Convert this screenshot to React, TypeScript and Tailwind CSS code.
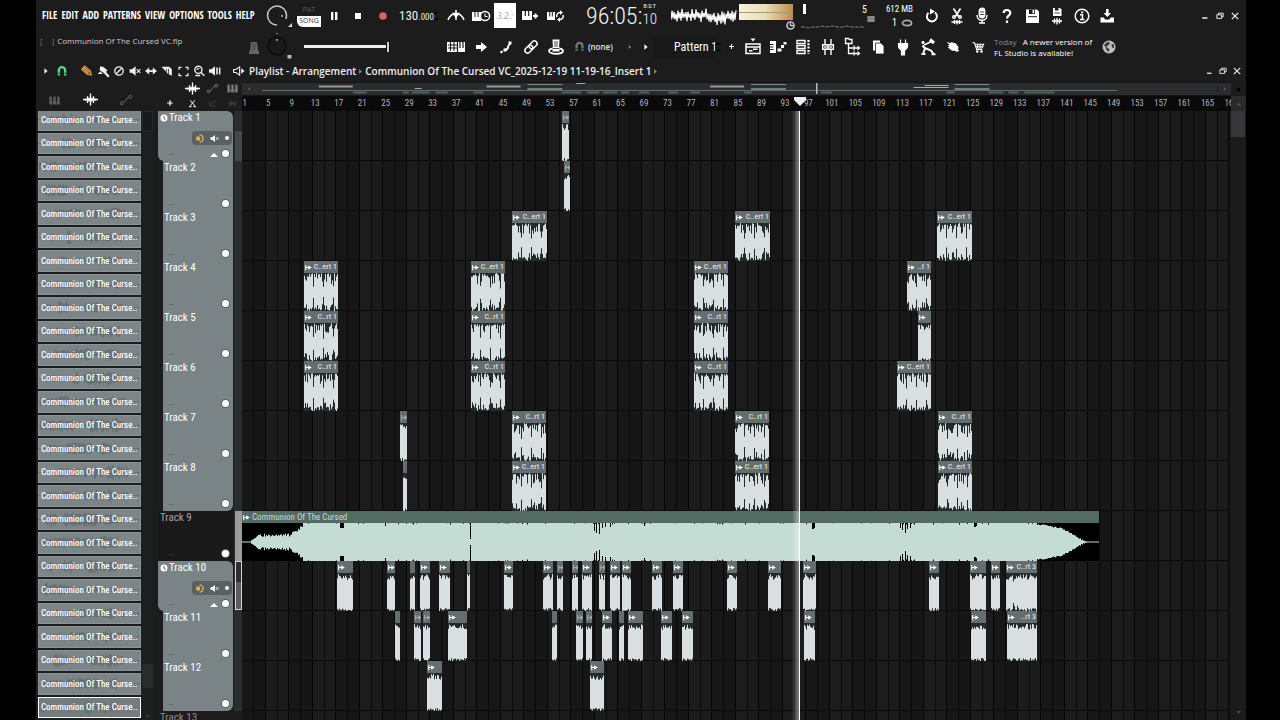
import type { ReactNode } from "react";

const COND = "font-['Roboto_Condensed','Open_Sans',sans-serif]";
const MENU_FONT = "font-['Open_Sans_Condensed','Roboto_Condensed',sans-serif]";

/* ---------- icons: all drawn on a 20 x 20 box ---------- */

const ICONS: Record<string, ReactNode> = {
  pause: <path d="M7 6h2.4v8H7zM11 6h2.4v8H11z" fill="currentColor" />,
  stop: <path d="M7 7h6v6H7z" fill="currentColor" />,
  record: <circle cx="10" cy="10" r="3.8" fill="#e0605f" />,
  metronome: (
    <g fill="none" stroke="currentColor" strokeWidth="1.5">
      <path d="M2 14c2-5 5-6.500 8-6.500s6 1.500 8 6.500" />
      <path d="M10 4v10" />
      <path d="M7.500 7.500L10 11l2.500-3.500z" fill="currentColor" />
    </g>
  ),
  wait: (
    <g>
      <path d="M1 6h9v9H1z" fill="currentColor" />
      <path d="M4 6v5M7 6v5" stroke="#1c1c1c" strokeWidth="1" />
      <circle cx="14" cy="10" r="4.600" fill="#1c1c1c" stroke="currentColor" strokeWidth="1.500" />
      <path d="M14 7.500V10.500h2.500" stroke="currentColor" fill="none" />
    </g>
  ),
  overdub: (
    <g>
      <path d="M2 5h10v9H2z" fill="currentColor" />
      <path d="M5.300 5v5M8.700 5v5" stroke="#1c1c1c" strokeWidth="1.200" />
      <path d="M15.500 7.500v5M13 10h5" stroke="currentColor" strokeWidth="2" />
    </g>
  ),
  loopRec: (
    <g>
      <path d="M2 6h8v8H2z" fill="currentColor" />
      <path d="M4.700 6v4.500M7.300 6v4.500" stroke="#1c1c1c" />
      <path d="M11.800 11a3.400 3.400 0 0 1 3.500-4.400M18 9a3.400 3.400 0 0 1-3.500 4.600" fill="none" stroke="currentColor" strokeWidth="1.500" />
      <path d="M15 4.200l3 2.400-3 2.400zM15 11.200l-3 2.400 3 2.400z" fill="currentColor" />
    </g>
  ),
  keyboard: (
    <g>
      <path d="M1 5h18v10H1z" fill="currentColor" />
      <path d="M2 8h9M2 11h9M4.500 5v9M8 5v9" stroke="#1c1c1c" strokeWidth="1.100" />
      <path d="M11.500 5v10M14 5v6M17 5v6" stroke="#1c1c1c" strokeWidth="1.200" />
    </g>
  ),
  arrow: <path d="M5 8h5V5l6 5-6 5v-3H5z" fill="currentColor" />,
  steps: (
    <g fill="currentColor">
      <circle cx="5.500" cy="15" r="1.300" />
      <circle cx="9" cy="13" r="1.800" />
      <path d="M9 13c4.500 0 1.500-4 5-6" stroke="currentColor" strokeWidth="2" fill="none" />
      <path d="M12.500 4.500h3v3h-3z" />
    </g>
  ),
  link: (
    <g fill="none" stroke="currentColor" strokeWidth="1.500" transform="rotate(-45 10 10)">
      <rect x="2.500" y="7.300" width="9" height="5.400" rx="2.700" />
      <rect x="8.500" y="7.300" width="9" height="5.400" rx="2.700" />
    </g>
  ),
  hat: (
    <g>
      <path d="M6.500 2.500h7l-.5 9H7z" fill="currentColor" />
      <path d="M9 4v6M11 4v6" stroke="#1c1c1c" strokeWidth=".8" />
      <ellipse cx="10" cy="14" rx="7" ry="2.800" fill="none" stroke="currentColor" strokeWidth="1.800" />
      <path d="M6.500 10.500h7v4h-7z" fill="currentColor" />
      <path d="M6.500 11.500h7" stroke="#1c1c1c" strokeWidth=".8" />
    </g>
  ),
  magnet: (
    <g fill="none" stroke="currentColor" strokeWidth="3.400">
      <path d="M5.500 16.500V9a4.500 4.500 0 0 1 9 0v7.500" />
      <path d="M3.500 13.200h4.500M12 13.200h4.500" stroke="#1c1c1c" strokeWidth="1.100" />
    </g>
  ),
  playlist: (
    <g fill="none" stroke="currentColor" strokeWidth="1.500">
      <path d="M3 7h14v9.500H3zM3 10h14" />
      <path d="M6 13.800h3.500M10 12.300h4.500" />
      <path d="M7.500 1.500h5L10 4.500z" fill="currentColor" stroke="none" />
    </g>
  ),
  pianoroll: (
    <g fill="currentColor">
      <path d="M2 4h6v12H2z" />
      <path d="M2 7.500h3.500M2 10h3.500M2 12.500h3.500" stroke="#1c1c1c" strokeWidth="1" />
      <path d="M9.500 11.500h4v3h-4zM13 8h3v3h-3zM15.500 5h3v2.600h-3z" />
    </g>
  ),
  rack: (
    <g fill="none" stroke="currentColor" strokeWidth="1.400">
      <path d="M4 3.500h8v3H4zM4 8.500h8v3H4zM4 13.500h8v3H4z" />
      <path d="M15.500 3v14" strokeDasharray="2 1.300" strokeWidth="2.200" />
    </g>
  ),
  mixer: (
    <g fill="none" stroke="currentColor" strokeWidth="1.400">
      <path d="M7 2v5M13 2v5M7 13v5M13 13v5" />
      <path d="M4.700 7.700h4.500v4.500H4.700zM10.900 7.700h4.500v4.500h-4.500z" />
      <path d="M7 9v2M13 9v2" />
    </g>
  ),
  tree: (
    <g fill="none" stroke="currentColor" strokeWidth="1.300">
      <path d="M2.500 1.500h3l1 1h2.500v4H2.500zM5.500 7v9.500h5M5.500 11h5" />
      <path d="M11 8.500v5M11 14.500v4M11 11h4M11 16.500h4" />
      <path d="M14.500 8.500l3 2.500-3 2.500zM14.500 14l3 2.500-3 2.500z" fill="currentColor" stroke="none" />
    </g>
  ),
  copy: (
    <g>
      <path d="M5 3.500h7v10H5z" fill="currentColor" />
      <path d="M7.500 6h5.500l3 3v8H7.500z" fill="currentColor" stroke="#1c1c1c" strokeWidth=".8" />
    </g>
  ),
  plug: <path d="M7.500 2.500v4M12.500 2.500v4M5.500 6.500h9v3c0 2-2.500 3.500-3 4V18h-3v-4.500c-.5-.5-3-2-3-4z" fill="currentColor" stroke="currentColor" strokeWidth="1.200" />,
  digger: (
    <g fill="none" stroke="currentColor" strokeWidth="2">
      <path d="M12 2.500l4 3.500" strokeWidth="3" />
      <path d="M13.500 4.500L6 8" strokeWidth="1.500" />
      <circle cx="5" cy="5.500" r="1.200" fill="currentColor" strokeWidth="1" />
      <path d="M4.500 8.500l2.500 3L5 17M7 11l6 2.500 2.500 3.500M3.500 17h4M13.500 17.200h4" />
    </g>
  ),
  touch: <path d="M3 4.500l4 1.500 2-1 5 1.500 3 4-.5 3 1.500 1.500-3 1.500-2-1.500c-3 .5-5-.5-6-2L4 11l2.500-.5-2-2L6.500 8z" fill="currentColor" />,
  cart: (
    <g fill="none" stroke="currentColor" strokeWidth="1.500">
      <path d="M2 4h3l3 9.500h8M6 6h12l-2 5.500H7.500M6.500 8.800h10.500M9.500 6v5.500M13 6v5.500" />
      <circle cx="9" cy="16.500" r="1.100" fill="currentColor" />
      <circle cx="15" cy="16.500" r="1.100" fill="currentColor" />
    </g>
  ),
  globe: (
    <g>
      <circle cx="10" cy="10" r="6.500" fill="#bdbdbd" />
      <path d="M8 5l3 .5-1 2.500-2.500 1 1 2 2 1-1 3-2-2-1-3-1.500-2zM12.500 7l2.500.5v3.500l-2-.5z" fill="#3a3a3a" />
    </g>
  ),
  undo: (
    <g fill="none" stroke="currentColor" strokeWidth="1.900">
      <path d="M6.500 6.800a5 5 0 1 0 6.500-.3" />
      <path d="M8 2.500v6l5-3z" fill="currentColor" stroke="none" />
    </g>
  ),
  cut: (
    <g fill="none" stroke="currentColor" strokeWidth="1.400">
      <path d="M6.500 2.500L12 11M13.500 2.500L8 11" strokeWidth="1.700" />
      <circle cx="7" cy="11" r="1.300" />
      <circle cx="13" cy="11" r="1.300" />
      <path d="M4.500 16h11M7.500 14v4M12.500 14v4M10 14v4.500" />
    </g>
  ),
  mic: (
    <g fill="none" stroke="currentColor" strokeWidth="1.400">
      <rect x="7.300" y="2.300" width="5.400" height="9.500" rx="2.700" fill="currentColor" />
      <path d="M5 9c0 7 10 7 10 0M10 14.500v2M7 17h6" />
      <path d="M8 6h4M8 8.500h4" stroke="#1c1c1c" strokeWidth=".8" />
    </g>
  ),
  help: (
    <g fill="none" stroke="currentColor" strokeWidth="2.200">
      <path d="M6.700 7c0-4 6.600-4 6.600 0 0 2.500-3.300 2.500-3.300 5.600" />
      <path d="M10 14.500v2.500" />
    </g>
  ),
  save: (
    <g>
      <path d="M4 3.500h11l2 2V17H4z" fill="currentColor" />
      <path d="M7 3.500h6v4.500H7z" fill="#1c1c1c" />
      <path d="M10.500 4h1.700v3.300h-1.700z" fill="currentColor" />
      <path d="M6 10.700h9" stroke="#1c1c1c" />
    </g>
  ),
  saveNew: (
    <g>
      <path d="M6 2h7l1.500 1.500V10H6z" fill="currentColor" />
      <path d="M8 2h3.500v2.500H8z" fill="#1c1c1c" />
      <path d="M7.500 7h5.500" stroke="#1c1c1c" strokeWidth=".8" />
      <path d="M5 15h10M7.500 12.500v5M12.500 12.500v5M10 12v6.500" stroke="currentColor" strokeWidth="1.400" />
    </g>
  ),
  info: (
    <g fill="none" stroke="currentColor" strokeWidth="1.500">
      <circle cx="10" cy="10" r="6.800" />
      <path d="M8 8.800h2.400v4.800M8 13.600h4.500" />
      <path d="M10.200 5.500v1.800" strokeWidth="2" />
    </g>
  ),
  download: (
    <g fill="currentColor">
      <path d="M9 3h2.600v4H14l-3.700 4L6.600 7H9z" />
      <path d="M3.500 11.500h3.500c0 3 6.500 3 6.500 0H17v5H3.500z" />
    </g>
  ),
  pencil: (
    <g transform="rotate(42 10 10)" fill="none" stroke="#e9a24a" strokeWidth="1.600">
      <path d="M1 6.500h12l5 3.500-5 3.500H1z" fill="#6e4719" />
      <path d="M1 8.900h12M1 11.300h12" />
    </g>
  ),
  brush: (
    <g fill="currentColor">
      <path d="M5 2l5 1 6 5-4 5-8-5z" />
      <path d="M11 10l7 8" stroke="currentColor" strokeWidth="3.400" />
      <path d="M1 14l4-4 4 4z" />
    </g>
  ),
  forbid: (
    <g fill="none" stroke="currentColor" strokeWidth="2.200">
      <circle cx="10" cy="10" r="7" />
      <path d="M5.500 14.500l9-9" />
    </g>
  ),
  mute: (
    <g>
      <path d="M1 7h4l6-5v16l-6-5H1z" fill="currentColor" />
      <path d="M13 7l6 6M19 7l-6 6" stroke="currentColor" strokeWidth="1.800" />
    </g>
  ),
  slip: (
    <g fill="currentColor">
      <path d="M0 10l7-6v12zM20 10l-7-6v12z" />
      <path d="M4 8.500h12v3H4z" />
    </g>
  ),
  slice: (
    <g fill="currentColor">
      <path d="M1 3h13l4 4v11l-7-4z" />
      <path d="M9 6.500v7M12.500 6v9" stroke="#1c1c1c" strokeWidth="1.200" />
    </g>
  ),
  select: <path d="M2 7V2.500h4.500M13.500 2.500H18V7M18 13v4.500h-4.500M6.500 17.500H2V13" fill="none" stroke="currentColor" strokeWidth="2.400" />,
  zoom: (
    <g fill="none" stroke="currentColor" strokeWidth="2.300">
      <circle cx="9" cy="8" r="6" />
      <path d="M13 12l6 6M4 17.500h8" />
      <path d="M6.500 8.500a2.500 2.500 0 0 1 4-2" strokeWidth="1.800" />
    </g>
  ),
  playback: (
    <g fill="currentColor">
      <path d="M0 7h4l6-5v16l-6-5H0z" />
      <path d="M12 4h2.500v12H12zM16.500 4H19v12h-2.500z" />
    </g>
  ),
  speaker: (
    <g>
      <path d="M1 7.500h4l6-4.500v14l-6-4.500H1z" fill="none" stroke="currentColor" strokeWidth="1.900" />
      <path d="M13.500 5.500l6 4.500-6 4.500z" fill="currentColor" />
    </g>
  ),
  wave: (
    <path
      d="M0 10h20M3.500 8.500v3M6 5.500v9M8 7.500v5M10 2v16M12 7.500v5M14 5.500v9M16.500 8.500v3"
      stroke="currentColor"
      strokeWidth="1.800"
    />
  ),
  auto: (
    <g fill="none" stroke="currentColor" strokeWidth="1.500">
      <circle cx="4" cy="14.500" r="2" />
      <circle cx="16" cy="5.500" r="2" />
      <path d="M6 13.500c4-1 4-6 8-7" />
    </g>
  ),
  keys: (
    <g>
      <path d="M2 4h16v12H2z" fill="currentColor" />
      <path d="M7 4v7M13 4v7" stroke="#1c1c1c" strokeWidth="2.200" />
      <path d="M7 11v5M13 11v5" stroke="#1c1c1c" />
    </g>
  ),
  plus: <path d="M10 3v14M3 10h14" stroke="currentColor" strokeWidth="3" />,
  cross: <path d="M5 3l10 12M15 3L5 15M2 17h6M12 17h6" stroke="currentColor" strokeWidth="2.200" />,
  check: <path d="M4 4v12M4 14L17 4M8 16h8" stroke="currentColor" strokeWidth="1.800" fill="none" />,
  swap: <path d="M1 10l6-5v10zM19 10l-6-5v10zM6 10h8" stroke="currentColor" fill="none" strokeWidth="1.800" />,
  minimize: <path d="M3 15h13" stroke="currentColor" strokeWidth="3.500" />,
  restore: <path d="M2 7h12v9H2zM6 7V3h12v9h-4" stroke="currentColor" strokeWidth="2.200" fill="none" />,
  close: <path d="M2 2l16 16M18 2L2 18" stroke="currentColor" strokeWidth="2.800" />,
  right: <path d="M6 3l8 7-8 7z" fill="currentColor" />,
};

function Icon({ name, className = "size-5" }: { name: string; className?: string }) {
  return (
    <svg viewBox="0 0 20 20" className={`shrink-0 ${className}`} aria-hidden="true">
      {ICONS[name]}
    </svg>
  );
}

function IconButton({ name, label, box = "w-[25px] h-full", icon = "size-5" }: { name: string; label: string; box?: string; icon?: string }) {
  return (
    <button type="button" aria-label={label} className={`flex shrink-0 items-center justify-center ${box}`}>
      <Icon name={name} className={icon} />
    </button>
  );
}

/* ---------- waveforms ---------- */

function noise(seed: number) {
  let s = (seed * 2654435761) >>> 0 || 1;
  return () => {
    s ^= s << 13;
    s >>>= 0;
    s ^= s >>> 17;
    s ^= s << 5;
    s >>>= 0;
    return s / 4294967296;
  };
}

function columns(width: number, level: (x: number) => [number, number]) {
  let d = "";
  for (let x = 0; x < width; x += 1) {
    const [up, down] = level(x);
    d += `M${x} ${(19 - up).toFixed(1)}h1V${(19 + down).toFixed(1)}h-1z`;
  }
  return d;
}

function clipWave(width: number, seed: number, busy: boolean) {
  const r = noise(seed);
  return columns(width, (x) => {
    if (busy) {
      if (x % 10 === 9) return [3 + r() * 3, 5 + r() * 3];
      const dip = r() < 0.34;
      return dip ? [8 + r() * 6, 10 + r() * 6] : [15 + r() * 4, 15 + r() * 4];
    }
    const up = 12 + r() * 6;
    const down = 16 + r() * 3;
    if (width > 30 && x > 6 && x < 12) return [up * 0.6 + r() * 6, down * 0.5 + r() * 9];
    return [up, down];
  });
}

function masterWave() {
  const r = noise(77);
  const dips: Record<number, number> = {
    98: 14, 99: 14, 100: 14, 101: 14, 143: 16, 228: 3, 352: 11, 354: 9, 357: 8, 360: 14, 363: 15, 368: 15,
    402: 16, 570: 13, 571: 13, 572: 14, 658: 14, 660: 12, 663: 9, 665: 13, 668: 14, 732: 15, 733: 15, 734: 16,
  };
  return columns(857, (x) => {
    let h: number;
    if (x < 9) h = 0.6;
    else if (x < 16) h = 1 + (x - 9) * 0.7 + r();
    else if (x < 50) h = 5 + r() * 3.5;
    else if (x < 61) h = 7 + (x - 50) * 0.7 + r() * 3;
    else if (x < 795) h = 19 - (r() < 0.12 ? r() * 1.6 : 0);
    else if (x < 818) h = 18.5 - (x - 795) * 0.15 - r() * 1.5;
    else if (x < 845) h = Math.max(0.8, 15 - (x - 818) * 0.55 - r() * 1.5);
    else h = 0.5;
    if (dips[x]) h = dips[x];
    return [h, h];
  });
}

function browserWave(seed: number) {
  const r = noise(seed + 300);
  const start = Math.floor(r() * 22);
  const end = 78 + Math.floor(r() * 12);
  let d = "M0 10.500h101";
  let level = 0.6;
  for (let x = start; x < end; x += 1) {
    if (r() < 0.15) level = 0.25 + r() * 0.75;
    const h = 8 * level * (0.5 + r() * 0.5);
    d += `M${x + 0.5} ${(10.5 - h).toFixed(1)}V${(10.5 + h).toFixed(1)}`;
  }
  return d;
}

function scopeWave() {
  const r = noise(19);
  let d = "M0 10";
  for (let x = 0; x <= 65; x += 1) {
    const c = x > 38 && x < 55 ? 14 : 11;
    d += `L${x} ${(c + (x % 2 ? -1 : 1) * (1 + r() * 6)).toFixed(1)}`;
  }
  return d;
}

/* ---------- data ---------- */

type Clip = [left: number, right: number, label?: string];

// Clip edges in pixels from bar 1, one list for each track.
const CLIPS: Clip[][] = [
  [[320, 327]],
  [[322, 328]],
  [[270, 305, "C..ert 1"], [493, 528, "C..ert 1"], [695, 730, "C..ert 1"]],
  [[62, 96, "C..ert 1"], [229, 263, "C..ert 1"], [452, 486, "C..ert 1"], [665, 689, "..t 1"]],
  [[62, 96, "C..rt 1"], [229, 263, "C..rt 1"], [452, 486, "C..rt 1"], [676, 689]],
  [[62, 96, "C..rt 1"], [229, 263, "C..rt 1"], [452, 486, "C..rt 1"], [655, 689, "C..ert 1"]],
  [[158, 165], [270, 304, "C..rt 1"], [493, 527, "C..rt 1"], [696, 730, "C..rt 1"]],
  [[161, 165], [270, 304, "C..ert 1"], [493, 527, "C..ert 1"], [696, 730, "C..ert 1"]],
  [],
  [
    [95, 111], [145, 153], [168, 173], [178, 188], [197, 208], [225, 228], [262, 271], [301, 311], [315, 321],
    [330, 336], [340, 350], [357, 363], [368, 378], [380, 389], [410, 420], [431, 441], [485, 495], [526, 539],
    [561, 574], [687, 697], [728, 744], [749, 758], [764, 795, "C..rt 3"],
  ],
  [
    [153, 158], [172, 179], [181, 188], [206, 225], [310, 315], [334, 341], [344, 350], [360, 370], [377, 382],
    [386, 401], [419, 430], [440, 451], [562, 573], [729, 744], [765, 795, "..rt 3"],
  ],
  [[185, 200], [348, 362]],
];

const BARS = Array.from({ length: 43 }, (_, i) => 1 + i * 4);
const MENU = ["FILE", "EDIT", "ADD", "PATTERNS", "VIEW", "OPTIONS", "TOOLS", "HELP"];

/* ---------- toolbar ---------- */

function Toolbar() {
  return (
    <header className="flex h-[62px] shrink-0 overflow-hidden">
      <div className="flex w-[228px] shrink-0 flex-col">
        <nav className={`flex h-[31px] items-center gap-1 whitespace-nowrap pl-[6px] text-[10px] ${MENU_FONT}`}>
          {MENU.map((m) => (
            <button key={m} type="button">{m}</button>
          ))}
        </nav>
        <div className="flex h-[31px] items-start whitespace-nowrap pl-1 pt-[3px] text-[8px] leading-[14px] text-[#c9c9c9]">
          <span className="text-[#777]">[</span>
          <span className="ml-[9px] mr-[3px] text-[#777]">]</span>
          <span>Communion Of The Cursed VC.flp</span>
          <svg viewBox="0 0 12 14" className="ml-auto mr-1 mt-[7px] h-[14px] w-3" aria-hidden="true">
            <path d="M3 1h6l1 9H2zM1 10h10v3H1z" fill="#666" />
            <path d="M5 2v7M7 2v7" stroke="#333" strokeWidth=".7" />
          </svg>
        </div>
      </div>

      <svg viewBox="0 0 32 62" className="h-[62px] w-8 shrink-0" aria-hidden="true">
        <circle cx="13" cy="15.500" r="9.500" fill="none" stroke="#c9c9c9" strokeWidth="1.500" strokeDasharray="48 60" transform="rotate(90 13 15.500)" />
        <circle cx="18" cy="16" r="1" fill="#bbb" />
        <path d="M28 23v4h-4z" fill="#ddd" />
        <circle cx="13" cy="46" r="9" fill="#191919" stroke="#0c0c0c" strokeWidth="1.500" />
        <path d="M13 39v2M13 33v1" stroke="#ccc" strokeWidth="1.200" />
        <path d="M23.500 55h4v3.500h-4z" fill="#bbb" />
      </svg>

      <div className="flex w-[147px] shrink-0 flex-col">
        <div className="flex h-[31px] items-center">
          <div className="flex w-[25px] shrink-0 flex-col pl-px text-center text-[7px] leading-[10px]">
            <button type="button" className="h-[11px] text-[#5c5c5c]">PAT</button>
            <button type="button" className="h-[11px] rounded-bl-md bg-white text-[#333]">SONG</button>
          </div>
          <IconButton name="pause" label="Pause" />
          <IconButton name="stop" label="Stop" box="w-6 h-full" />
          <IconButton name="record" label="Record" />
          <output className={`ml-1 flex w-[34px] items-baseline text-[13px] text-[#ececec] ${COND}`}>
            130<span className="text-[9px]">.000</span>
          </output>
          <svg viewBox="0 0 8 14" className="h-[14px] w-2 shrink-0" aria-hidden="true">
            <path d="M1 5l2.500-3L6 5zM1 9l2.500 3L6 9z" fill="#050505" />
          </svg>
        </div>
        <div className="flex h-[31px] items-center pl-2">
          <input
            type="range"
            aria-label="Song position"
            defaultValue={100}
            className="h-[3px] w-[86px] appearance-none bg-[#ededed] [&::-webkit-slider-thumb]:h-[10px] [&::-webkit-slider-thumb]:w-1 [&::-webkit-slider-thumb]:appearance-none [&::-webkit-slider-thumb]:border-x [&::-webkit-slider-thumb]:border-[#0a0a0a] [&::-webkit-slider-thumb]:bg-[#cfcfcf]"
          />
        </div>
      </div>

      <div className="flex w-[128px] shrink-0 flex-col">
        <div className="flex h-[31px] items-center">
          <IconButton name="metronome" label="Metronome" />
          <IconButton name="wait" label="Wait for input" />
          <button type="button" className="mx-px flex h-[25px] w-[22px] items-center justify-center bg-white text-[9px] italic text-[#aaa]">
            3.2.:
          </button>
          <IconButton name="overdub" label="Overdub" />
          <IconButton name="loopRec" label="Loop recording" />
        </div>
        <div className="flex h-[31px] items-center">
          <IconButton name="keyboard" label="Typing keyboard" />
          <IconButton name="arrow" label="Step" />
          <IconButton name="steps" label="Slide" />
          <IconButton name="link" label="Link" />
          <IconButton name="hat" label="Assistant" />
        </div>
      </div>

      <div className="flex min-w-0 flex-1 flex-col">
        <div className="flex h-[31px] items-center">
          <output className={`flex w-[96px] shrink-0 items-start pl-[15px] text-[24px] font-light leading-[30px] text-[#f2f2f2] ${COND}`}>
            96:05:
            <span className="flex flex-col items-center text-[15px] leading-[16px]">
              <span className="text-[6px] font-normal leading-[10px]">B:S:T</span>
              <span>10</span>
            </span>
          </output>
          <svg viewBox="0 0 66 24" className="ml-1 h-6 w-[66px] shrink-0 text-white" aria-hidden="true">
            <path d={scopeWave()} fill="none" stroke="currentColor" strokeWidth="1.200" />
          </svg>
          <div className="ml-0.5 flex h-[31px] w-[58px] shrink-0 flex-col pt-1">
            <div className="flex h-4 w-[54px] flex-col justify-center bg-linear-to-r from-[#f7f1de] via-[#eadcb4] to-[#c08a50]">
              <div className="h-px bg-[#a79a78]" />
            </div>
            <svg viewBox="0 0 10 10" className="ml-[47px] mt-px size-[9px]" aria-hidden="true">
              <circle cx="5" cy="5" r="4" fill="#333" stroke="#ddd" strokeWidth="1.500" />
              <path d="M5 2.500V5h3" stroke="#fff" fill="none" />
            </svg>
          </div>
          <div className="flex h-[31px] w-[82px] shrink-0 flex-col pl-1">
            <div className={`flex h-[23px] text-[10px] ${COND}`}>
              <div className="ml-0.5 mt-1 h-[10px] w-[3px] bg-white" />
              <span className="ml-auto pt-0.5 leading-4">5</span>
              <svg viewBox="0 0 8 6" className="mr-1 mt-4 h-[6px] w-2" aria-hidden="true">
                <path d="M1 0h6v6H1zM0 1.500h8M0 4.500h8" fill="#888" stroke="#888" />
              </svg>
            </div>
            <svg viewBox="0 0 64 6" className="h-[6px] w-16" aria-hidden="true">
              <path d="M0 4h5l2 1 5-1h6l2-1 6 1 5-1 6 1h5l3-1 5 1h14" stroke="#999" strokeWidth=".8" fill="none" strokeDasharray="4 1" />
            </svg>
          </div>
          <div className={`flex w-[34px] shrink-0 flex-col items-end whitespace-nowrap text-[9px] leading-[14px] ${COND}`}>
            <span>612 MB</span>
            <span className="flex items-center gap-1 text-[10px]">
              1
              <svg viewBox="0 0 12 8" className="h-2 w-3" aria-hidden="true">
                <ellipse cx="6" cy="4" rx="4.500" ry="2.600" fill="none" stroke="#aaa" strokeWidth="1.800" />
              </svg>
            </span>
          </div>
          <div className="ml-1.5 flex h-full shrink-0">
            <IconButton name="undo" label="Undo" />
            <IconButton name="cut" label="Cut" />
            <IconButton name="mic" label="Record audio" />
            <IconButton name="help" label="Help" />
            <IconButton name="save" label="Save" />
            <IconButton name="saveNew" label="Save new version" />
            <IconButton name="info" label="Info" />
            <IconButton name="download" label="Download" />
          </div>
          <div className="ml-auto flex h-full shrink-0 pr-1">
            <IconButton name="minimize" label="Minimize" box="w-[15px]" icon="size-[8px]" />
            <IconButton name="restore" label="Restore" box="w-[15px]" icon="size-[8px]" />
            <IconButton name="close" label="Close" box="w-[15px]" icon="size-[8px]" />
          </div>
        </div>

        <div className="flex h-[31px] items-center">
          <span className="flex w-4 shrink-0 justify-center text-[#777]">
            <Icon name="magnet" className="size-[13px]" />
          </span>
          <select aria-label="Snap" className="ml-px h-4 w-[39px] appearance-none bg-transparent text-[8px] font-semibold text-[#e4e4e4]">
            <option>(none)</option>
          </select>
          <span className="flex w-[7px] text-[#888]"><Icon name="right" className="size-[6px]" /></span>
          <span className="ml-1 flex w-[15px] justify-center"><Icon name="right" className="size-[8px]" /></span>
          <select aria-label="Pattern" className={`h-[22px] w-[62px] appearance-none bg-[#191919] pl-[21px] text-[12px] ${COND}`}>
            <option>Pattern 1</option>
          </select>
          <svg viewBox="0 0 8 14" className="h-[14px] w-2 shrink-0" aria-hidden="true">
            <path d="M1 5l2.500-3L6 5zM1 9l2.500 3L6 9z" fill="#050505" />
          </svg>
          <IconButton name="plus" label="Add pattern" box="w-4 h-full" icon="size-[7px]" />
          <div className="ml-px flex h-full shrink-0">
            <IconButton name="playlist" label="Playlist" />
            <IconButton name="pianoroll" label="Piano roll" />
            <IconButton name="rack" label="Channel rack" />
            <IconButton name="mixer" label="Mixer" />
            <IconButton name="tree" label="Browser" />
            <IconButton name="copy" label="Clipboard" />
            <IconButton name="plug" label="Plugins" />
            <IconButton name="digger" label="Tempo tapper" />
            <IconButton name="touch" label="Touch controller" icon="size-[17px]" />
            <IconButton name="cart" label="Shop" icon="size-[14px]" />
          </div>
          <p className="ml-1 w-[105px] shrink-0 whitespace-nowrap text-[8px] leading-[11px] text-white">
            <span className="mr-1 text-[#8b8b8b]">Today</span> A newer version of
            <br />
            FL Studio is available!
          </p>
          <IconButton name="globe" label="Open news" box="w-[20px] h-full" />
        </div>
      </div>
    </header>
  );
}

function PlaylistTitle() {
  return (
    <div className="flex h-5 shrink-0 items-center pb-0.5 pl-1 text-[10px] font-semibold text-[#f0f0f0]">
      <IconButton name="right" label="Playlist menu" box="w-[12px]" icon="size-[8px]" />
      <span className="flex w-5 justify-center text-[#59d68c]"><Icon name="magnet" className="size-[14px]" /></span>
      <div className="ml-[7px] flex">
        <IconButton name="pencil" label="Draw" box="w-4" icon="size-[13px]" />
        <IconButton name="brush" label="Paint" box="w-4" icon="size-[13px]" />
        <IconButton name="forbid" label="Delete" box="w-4" icon="size-[12px]" />
        <IconButton name="mute" label="Mute" box="w-4" icon="size-[12px]" />
        <IconButton name="slip" label="Slip" box="w-4" icon="size-[12px]" />
        <IconButton name="slice" label="Slice" box="w-4" icon="size-[12px]" />
        <IconButton name="select" label="Select" box="w-4" icon="size-[11px]" />
        <IconButton name="zoom" label="Zoom" box="w-4" icon="size-[12px]" />
        <IconButton name="playback" label="Playback" box="w-4" icon="size-[12px]" />
      </div>
      <span className="ml-1.5 flex w-5 justify-center"><Icon name="speaker" className="size-[12px]" /></span>
      <h1 className="flex items-center gap-px whitespace-nowrap">
        Playlist - Arrangement
        <Icon name="right" className="size-[7px] text-[#888]" />
        Communion Of The Cursed VC_2025-12-19 11-19-16_Insert 1
        <Icon name="right" className="size-[7px] text-[#888]" />
      </h1>
      <div className="ml-auto flex pr-0.5">
        <IconButton name="minimize" label="Minimize playlist" box="w-[14px]" icon="size-[7px]" />
        <IconButton name="restore" label="Restore playlist" box="w-[14px]" icon="size-[8px]" />
        <IconButton name="close" label="Close playlist" box="w-[14px]" icon="size-[8px]" />
      </div>
    </div>
  );
}

/* ---------- clip picker ---------- */

function Picker() {
  return (
    <aside className="flex w-[122px] shrink-0 flex-col">
      <div className="z-10 flex h-[29px] shrink-0 items-end bg-[#1c1c1c] pb-1">
        <IconButton name="keys" label="Patterns" box="w-9 text-[#5c5c5c]" icon="size-[13px]" />
        <IconButton name="wave" label="Audio clips" box="w-9 text-white" icon="size-[15px]" />
        <IconButton name="auto" label="Automation clips" box="w-9 text-[#5c5c5c]" icon="size-[14px]" />
      </div>
      <div className="flex min-h-0 flex-1">
        <ul className="-mt-0.5 ml-0.5 grid w-[103px] shrink-0 auto-rows-fr grid-cols-[minmax(0,1fr)]">
          {Array.from({ length: 26 }, (_, i) => (
            <li key={i} className="min-h-0 pb-0.5">
              <button
                type="button"
                className={`grid h-full w-full grid-cols-[minmax(0,1fr)] items-center overflow-hidden border text-left *:[grid-area:1/1] ${
                  i === 25 ? "border-white bg-[#747c7e]" : "border-[#8b9496] bg-[#7c8587]"
                }`}
              >
                <svg viewBox="0 0 101 21" preserveAspectRatio="none" className="h-[19px] w-full" aria-hidden="true">
                  <path d={browserWave(i)} stroke="#687072" strokeWidth="1" fill="none" />
                </svg>
                <span className={`whitespace-nowrap pl-0.5 text-[9px] font-medium leading-4 text-white ${COND}`}>Communion Of The Curse..</span>
              </button>
            </li>
          ))}
        </ul>
        <div className="ml-px flex w-[11px] flex-col justify-between bg-[#1b1f20]">
          <div className="h-5 border border-[#26292a] bg-[#17191a]" />
          <div className="flex h-14 flex-col justify-between">
            <div className="h-6 bg-[#292c2d]" />
            <Icon name="right" className="size-[7px] rotate-90 self-center text-[#3a3d3e]" />
          </div>
        </div>
      </div>
    </aside>
  );
}

/* ---------- track headers ---------- */

function TrackHead({ index }: { index: number }) {
  const n = index + 1;
  const head = n === 1 || n === 10;
  const plain = n === 9;
  const lastInGroup = n === 8 || n === 12;
  return (
    <div className="flex h-[50px] shrink-0">
      <div
        className={`flex min-w-0 flex-1 flex-col ${head ? "rounded-bl-md rounded-tr-md bg-[#7a8486]" : plain ? "bg-[#191919]" : "ml-[5px] bg-[#7a8486]"} ${
          lastInGroup ? "rounded-br-md" : ""
        }`}
      >
        <div className={`flex h-[13px] items-center whitespace-nowrap text-[11px] leading-[13px] ${COND} ${plain ? "pl-0.5 text-[#a5a5a5]" : head ? "pl-0.5 text-white" : "pl-px text-white"}`}>
          {head && (
            <svg viewBox="0 0 8 8" className="mr-px size-2" aria-hidden="true">
              <circle cx="4" cy="4" r="3.500" fill="#fff" />
              <path d="M4 2v2.500l1.500 1" stroke="#555" fill="none" />
            </svg>
          )}
          Track {n}
        </div>
        <div className="mt-[7px] flex h-[14px] justify-end pr-px">
          {head && (
            <div className="flex w-10 items-center justify-around rounded bg-[#596163] text-white">
              <svg viewBox="0 0 10 10" className="size-[9px]" aria-hidden="true">
                <path d="M5 1a4 4 0 1 1 0 8" stroke="#e0b050" strokeWidth="1.600" fill="none" />
                <circle cx="3.500" cy="5" r="2.500" fill="#e0b050" />
              </svg>
              <Icon name="mute" className="size-[9px]" />
              <span className="size-1 rounded-full bg-white" />
            </div>
          )}
        </div>
        <div className="flex h-[14px] items-center justify-end gap-1 pr-1">
          <span className={`mr-auto text-[8px] leading-[8px] text-[#414849] ${head || plain ? "pl-[10px]" : "pl-[5px]"}`}>...</span>
          {head && (
            <svg viewBox="0 0 8 5" className="mt-1 h-[5px] w-2" aria-hidden="true">
              <path d="M0 5l4-4 4 4z" fill="#fff" />
            </svg>
          )}
          <button type="button" aria-label={`Enable track ${n}`} className="mt-[3px] size-[7px] rounded-full bg-white ring-1 ring-[#5a6264]" />
        </div>
      </div>
      <div className="ml-px flex w-2 flex-col bg-[#2a2d2e] pl-px">
        {n === 1 && <div className="mt-5 h-[30px] bg-[#43484a]" />}
        {plain && <div className="h-full bg-[#9b999a]" />}
        {n === 10 && (
          <div className="h-[49px] border border-[#d5d5d5] bg-[#5b5d5e]">
            <div className="h-5 bg-[#2c2e2f]" />
          </div>
        )}
      </div>
    </div>
  );
}

function TrackColumn() {
  return (
    <div className="flex w-[84px] shrink-0 flex-col overflow-hidden">
      <div className="flex h-[29px] shrink-0 flex-col">
        <div className="flex h-[13px] items-center justify-end text-[#777]">
          <IconButton name="wave" label="Show audio" box="w-5 text-white" icon="size-[15px]" />
          <IconButton name="auto" label="Show automation" box="w-5" icon="size-[13px]" />
          <IconButton name="keys" label="Show patterns" box="w-5" icon="size-[13px]" />
        </div>
        <div className="flex h-4 items-center justify-end text-[#4a4a4a]">
          <IconButton name="plus" label="Add track" box="w-6 text-white" icon="size-[8px]" />
          <IconButton name="cross" label="Clear" box="w-5 text-white" icon="size-[9px]" />
          <IconButton name="check" label="Magnet lock" box="w-5" icon="size-[9px]" />
          <IconButton name="swap" label="Stretch" box="w-5" icon="size-[9px]" />
        </div>
      </div>
      {CLIPS.map((_, i) => (
        <TrackHead key={i} index={i} />
      ))}
      <div className={`shrink-0 pl-0.5 text-[11px] leading-[13px] text-[#8a8a8a] ${COND}`}>Track 13</div>
    </div>
  );
}

/* ---------- arrangement ---------- */

function Overview() {
  return (
    <div className="flex h-[14px] shrink-0 items-center border-y border-[#151515] bg-[#2b2c2d]">
      <Icon name="right" className="mx-1 size-[6px] rotate-180 text-[#555]" />
      <svg viewBox="256 83 963 12" preserveAspectRatio="none" className="h-3 min-w-0 flex-1" aria-hidden="true">
        <path d="M262 90.500H1119" stroke="#5d6f6b" />
        <path d="M319 86.500h34M487 86.500h34M711 86.500h34" stroke="#9b9999" strokeWidth="2" />
        <path d="M528 84.500h35M752 84.500h35M956 84.500h35" stroke="#7c8a88" />
        <path d="M528 89h35M752 89h35M956 89h35" stroke="#71807d" strokeWidth="2" />
        <path d="M577 83.500h9M415 88.500h7M915 87.500h35M926 85.500h24" stroke="#a8aaaa" />
        <path d="M353 92.500h14M403 92.500h6M412 92.500h18M436 92.500h12M474 92.500h10M562 92.500h20M588 92.500h12M604 92.500h14M622 92.500h8M640 92.500h10M669 92.500h10M691 92.500h10M745 92.500h8M822 92.500h11M948 92.500h8M990 92.500h15M1010 92.500h10M1026 92.500h30" stroke="#52625f" strokeWidth="2" />
        <path d="M818 83v11" stroke="#fff" />
      </svg>
      <div className="flex w-[14px] justify-center border-l border-[#1a1a1a]">
        <Icon name="right" className="size-[6px] text-[#555]" />
      </div>
    </div>
  );
}

function ClipMark({ faded }: { faded: boolean }) {
  return (
    <svg viewBox="0 0 8 8" className={`ml-px size-[7px] shrink-0 ${faded ? "text-[#a5abab]" : "text-white"}`} aria-hidden="true">
      <path d="M.8 1v6M1 4h3.500" stroke="currentColor" strokeWidth="1.200" />
      <path d="M3.700 1.500l4 2.500-4 2.500z" fill="currentColor" />
    </svg>
  );
}

function ClipBox({ clip, seed }: { clip: Clip; seed: number }) {
  const [left, right, label] = clip;
  const width = right - left;
  return (
    <div className="absolute top-0 flex h-[50px] flex-col overflow-hidden bg-[#232b2d]" style={{ left, width }}>
      <div className={`flex h-3 shrink-0 items-center bg-[#666d6e] text-[8px] leading-3 text-[#eef1f1] ${COND}`}>
        {width > 5 && <ClipMark faded={width < 8} />}
        {label && <span className="ml-auto whitespace-nowrap pr-px">{label}</span>}
      </div>
      <svg viewBox={`0 0 ${width} 38`} preserveAspectRatio="none" className="h-[38px] w-full" aria-hidden="true">
        <path d={clipWave(width, seed, Boolean(label?.endsWith("1")))} fill="#d9dfe1" />
      </svg>
    </div>
  );
}

function Arrangement() {
  return (
    <main className="flex min-w-0 flex-1 flex-col overflow-hidden">
      <Overview />
      <div className="relative flex h-[15px] shrink-0 overflow-hidden bg-[#0a0a0a] pt-px">
        <div className={`-ml-[9px] flex w-[1010px] shrink-0 items-center text-[9px] text-[#b0b0b0] ${COND}`}>
          {BARS.map((b) => (
            <span key={b} className="flex-1 text-center">{b}</span>
          ))}
        </div>
        <svg viewBox="0 0 12 9" className="absolute left-[552px] top-px h-[9px] w-3" aria-hidden="true">
          <path d="M0 0h12v3L6 9 0 3z" fill="#f0f0f0" />
        </svg>
      </div>
      <div className="relative min-h-0 flex-1 overflow-hidden bg-[#181818] bg-[repeating-linear-gradient(90deg,#171717_0px,#171717_11px,#080808_11px,#080808_12px,#161616_12px,#161616_23px,#050505_23px,#050505_24px,#1c1c1c_24px,#1c1c1c_35px,#0a0a0a_35px,#0a0a0a_36px,#1b1b1b_36px,#1b1b1b_46px,#050505_46px,#050505_47px)]">
        {CLIPS.map((row, i) => (
          <div key={i} className="relative h-[50px] border-b border-[#0a0a0a]">
            {row.map((clip, j) => (
              <ClipBox key={j} clip={clip} seed={i * 40 + j + 3} />
            ))}
            {i === 8 && (
              <div className="absolute left-0 top-0 flex h-[50px] w-[857px] flex-col bg-black">
                <div className={`flex h-3 items-center gap-[2px] bg-[#526b63] text-[9px] leading-3 text-[#c8d8d2] ${COND}`}>
                  <ClipMark faded={false} />
                  Communion Of The Cursed
                </div>
                <svg viewBox="0 0 857 38" preserveAspectRatio="none" className="h-[38px] w-full" aria-hidden="true">
                  <path d={masterWave()} fill="#c5dcd4" />
                </svg>
              </div>
            )}
          </div>
        ))}
        <div className="absolute inset-y-0 left-[550px] w-2 border-r border-white bg-linear-to-r from-transparent to-white/45" />
      </div>
    </main>
  );
}

export default function App() {
  return (
    <div className="flex h-screen bg-black pl-9 pr-[34px] font-['Open_Sans','Noto_Sans',sans-serif] text-white">
      <div className="flex min-w-0 flex-1 flex-col overflow-hidden bg-[#1c1c1c]">
        <Toolbar />
        <PlaylistTitle />
        <div className="flex min-h-0 flex-1">
          <Picker />
          <TrackColumn />
          <Arrangement />
          <div className="flex w-[15px] shrink-0 flex-col bg-[#1b1b1b]">
            <div className="flex h-[14px] items-center justify-center"><span className="size-[3px] bg-black" /></div>
            <div className="flex h-[15px] items-center justify-center bg-[#2a2a2a] text-[#555]"><Icon name="right" className="size-[6px] -rotate-90" /></div>
            <div className="mr-px h-[26px] bg-[#343637]" />
            <Icon name="right" className="mb-1 mt-auto size-[7px] rotate-90 self-center text-[#444]" />
          </div>
        </div>
      </div>
    </div>
  );
}
